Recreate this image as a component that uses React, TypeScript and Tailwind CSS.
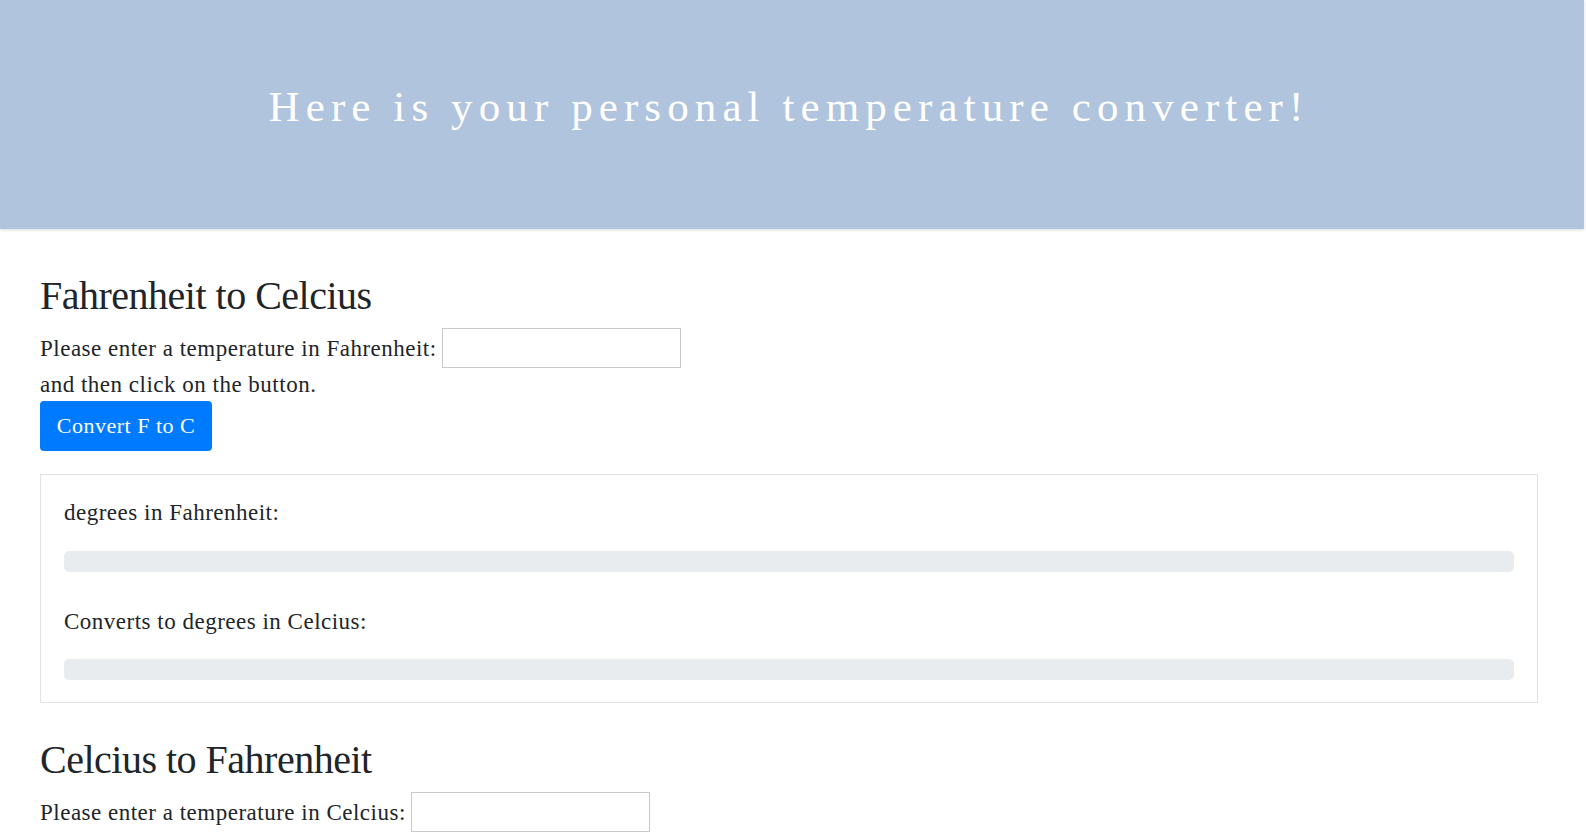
import React from "react";

const serif = { fontFamily: '"Liberation Serif", "Times New Roman", serif' };

function ResultCard({ from, to }: { from: string; to: string }) {
  return (
    <div className="mt-[23px] w-[1498px] border border-[#dfe3e7] px-[23px] pt-[26px] pb-[22px]">
      <div className="text-[23px] leading-none tracking-[0.5px] text-[#212529]">degrees in {from}:</div>
      <div className="mt-[27px] h-[21px] rounded-[5px] bg-[#e9ecef]" />
      <div className="mt-[38px] text-[23px] leading-none tracking-[0.5px] text-[#212529]">Converts to degrees in {to}:</div>
      <div className="mt-[26px] h-[21px] rounded-[5px] bg-[#e9ecef]" />
    </div>
  );
}

function Section({
  title,
  unit,
  button,
  from,
  to,
  first,
}: {
  title: string;
  unit: string;
  button: string;
  from: string;
  to: string;
  first?: boolean;
}) {
  return (
    <section className={first ? "pt-[47px]" : "pt-[37px]"}>
      <h1 className="text-[40px] leading-none tracking-[-0.5px] text-[#212529] font-normal">{title}</h1>
      <div className="mt-[12px] flex h-[40px] items-start">
        <span className="mt-[9px] text-[23px] leading-none tracking-[0.5px] text-[#212529]">
          Please enter a temperature in {unit}:
        </span>
        <input
          type="text"
          className="ml-[5px] h-[40px] w-[239px] border border-[#c8c8c8] bg-white px-2 outline-none"
        />
      </div>
      <div className="mt-[5px] text-[23px] leading-none tracking-[0.5px] text-[#212529]">
        and then click on the button.
      </div>
      <button
        type="button"
        className="mt-[5px] flex h-[50px] w-[172px] items-center justify-center rounded-[4px] bg-[#007bff] text-[22px] leading-none tracking-[0.5px] text-white"
        style={serif}
      >
        {button}
      </button>
      <ResultCard from={from} to={to} />
    </section>
  );
}

export default function App() {
  return (
    <div className="h-[833px] w-full overflow-hidden bg-white" style={serif}>
      <header className="h-[229px] w-[1584px] bg-[#b0c4de] pt-[85px] pr-[6px] shadow-[0_1px_3px_rgba(0,0,0,0.15)]">
        <div className="text-center text-[43px] leading-none tracking-[6.1px] text-white">
          Here is your personal temperature converter!
        </div>
      </header>
      <main className="px-[40px]">
        <Section
          first
          title="Fahrenheit to Celcius"
          unit="Fahrenheit"
          button="Convert F to C"
          from="Fahrenheit"
          to="Celcius"
        />
        <Section
          title="Celcius to Fahrenheit"
          unit="Celcius"
          button="Convert C to F"
          from="Celcius"
          to="Fahrenheit"
        />
      </main>
    </div>
  );
}
